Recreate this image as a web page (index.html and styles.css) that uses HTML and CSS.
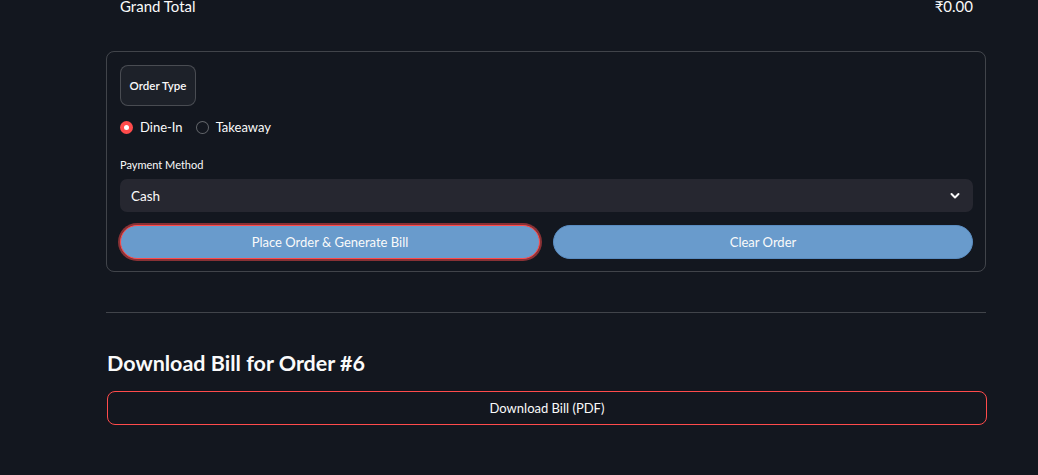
FILE: index.html
```html
<!DOCTYPE html>
<html>
<head>
<meta charset="utf-8">
<link rel="stylesheet" href="styles.css">
</head>
<body>
<div class="main">
  <div class="total-row">
    <span class="total-label">Grand Total</span>
    <span class="total-value">₹0.00</span>
  </div>

  <div class="panel">
    <div class="tag">Order Type</div>
    <div class="radios">
      <label class="radio"><span class="dot on"></span><span>Dine-In</span></label>
      <label class="radio"><span class="dot"></span><span>Takeaway</span></label>
    </div>
    <div class="field-label">Payment Method</div>
    <div class="select">
      <span>Cash</span>
      <svg class="chev" width="12" height="8" viewBox="0 0 12 8"><path d="M2.5 2 L6 5.5 L9.5 2" fill="none" stroke="#fafafa" stroke-width="2" stroke-linecap="round" stroke-linejoin="round"/></svg>
    </div>
    <div class="btn-row">
      <button class="pill focus">Place Order &amp; Generate Bill</button>
      <button class="pill">Clear Order</button>
    </div>
  </div>

  <hr class="divider">

  <h3 class="heading">Download Bill for Order #6</h3>
  <button class="outline">Download Bill (PDF)</button>
</div>
</body>
</html>
```

FILE: styles.css
```css
html, body {
  margin: 0;
  padding: 0;
  background: #13171f;
  color: #fafafa;
  font-family: Lato, "Liberation Sans", sans-serif;
  overflow: hidden;
}
.main {
  width: 880px;
  margin-left: 106px;
}
.total-row {
  display: flex;
  justify-content: space-between;
  margin-top: -6px;
  padding: 0 13px 0 14px;
  height: 24px;
  line-height: 24px;
  font-size: 15px;
}
.panel {
  margin-top: 33px;
  border: 1px solid rgba(250, 250, 250, 0.2);
  border-radius: 8px;
  padding: 13px 12px 12px 13px;
  height: 221px;
  box-sizing: border-box;
}
.tag {
  display: inline-flex;
  align-items: center;
  justify-content: center;
  width: 76px;
  height: 41px;
  box-sizing: border-box;
  border: 1px solid rgba(250, 250, 250, 0.2);
  border-radius: 8px;
  background: #1d2129;
  font-size: 11.5px;
  font-weight: 600;
}
.radios {
  display: flex;
  gap: 13px;
  margin-top: 11px;
  height: 20px;
  align-items: center;
}
.radio {
  display: flex;
  align-items: center;
  gap: 7px;
  font-size: 13px;
}
.dot {
  width: 13px;
  height: 13px;
  border-radius: 50%;
  box-sizing: border-box;
  border: 1px solid rgba(250, 250, 250, 0.35);
  background: #13171f;
  position: relative;
}
.dot.on {
  border: none;
  background: #ff4b4b;
}
.dot.on::after {
  content: "";
  position: absolute;
  left: 4px;
  top: 4px;
  width: 5px;
  height: 5px;
  border-radius: 50%;
  background: #fff;
}
.field-label {
  margin-top: 21px;
  font-size: 11px;
  line-height: 14px;
}
.select {
  margin-top: 7px;
  height: 33px;
  background: #262730;
  border-radius: 7px;
  display: flex;
  align-items: center;
  justify-content: space-between;
  padding: 0 12px 0 11px;
  font-size: 13.5px;
}
.btn-row {
  display: flex;
  gap: 13px;
  margin-top: 13px;
}
.pill {
  flex: 1;
  height: 34px;
  border-radius: 17px;
  background: #699bcc;
  border: 1px solid #5a8cc0;
  color: #fafafa;
  font-family: inherit;
  font-size: 13px;
}
.pill.focus {
  border-color: #ff4b4b;
  box-shadow: 0 0 0 2px rgba(255, 75, 75, 0.5);
}
.divider {
  margin: 40px 0 0;
  border: none;
  border-top: 1px solid rgba(250, 250, 250, 0.2);
}
.heading {
  margin: 36px 0 0 1px;
  font-size: 21.5px;
  font-weight: 700;
  line-height: 28px;
}
.outline {
  display: block;
  width: 880px;
  margin: 14px 0 0 1px;
  height: 34px;
  box-sizing: border-box;
  background: #13171f;
  border: 1px solid #ff4b4b;
  border-radius: 8px;
  color: #fafafa;
  font-family: inherit;
  font-size: 13px;
}
```
